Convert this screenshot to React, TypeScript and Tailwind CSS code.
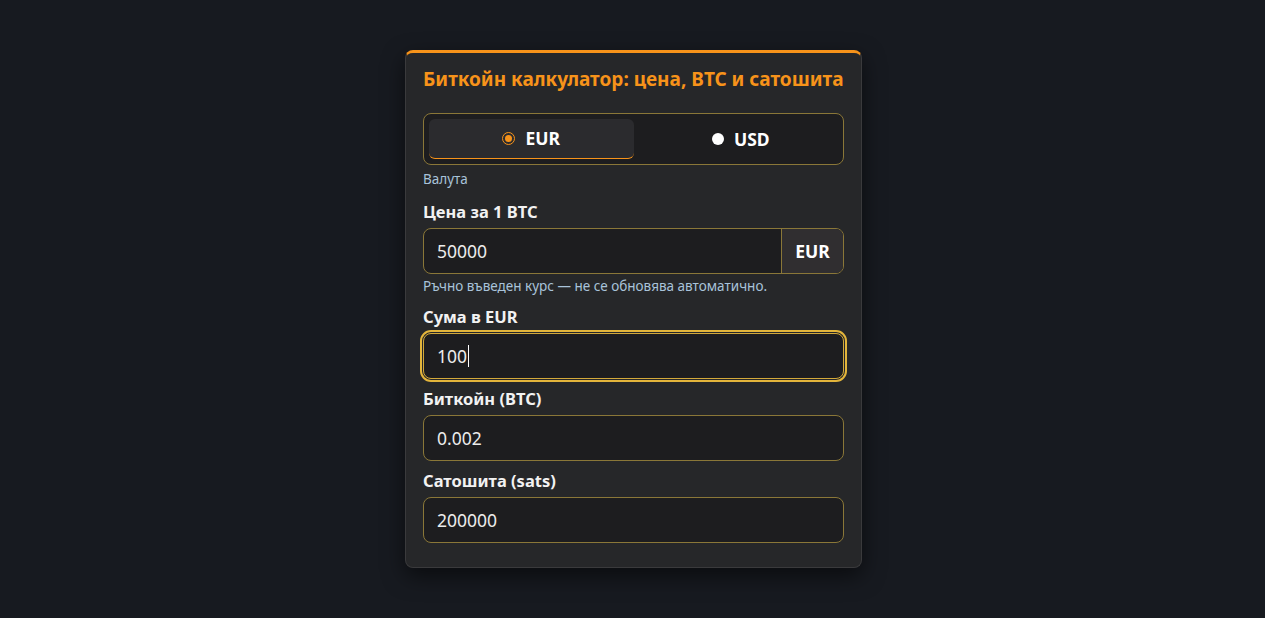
import React from "react";

const font = { fontFamily: '"Noto Sans", "Open Sans", sans-serif' };

function Field({ label, value, focused }: { label: string; value: string; focused?: boolean }) {
  return (
    <div className="flex flex-col gap-[6px]">
      <div className="text-[16.5px] leading-5 font-bold text-[#f2f2f2]">{label}</div>
      {focused ? (
        <div className="h-[46px] rounded-lg border border-[#d3a93a] bg-[#1d1d1f] outline-2 outline-offset-1 outline-[#e3b53b] outline flex items-center px-[13px] text-[17.5px] text-[#ececec]">
          {value}
          <span className="inline-block w-px h-[22px] bg-white ml-px" />
        </div>
      ) : (
        <div className="h-[46px] rounded-lg border border-[#8a7738] bg-[#1d1d1f] flex items-center px-[13px] text-[17.5px] text-[#ececec]">
          {value}
        </div>
      )}
    </div>
  );
}

export default function App() {
  return (
    <div style={font} className="min-h-screen bg-[#171a20] flex justify-center pt-[50px]">
      <div className="w-[457px] h-[518px] ml-[2px] rounded-lg border border-[#3a3a3c] border-t-[3px] border-t-[#f7931a] bg-[#262729] shadow-[0_8px_22px_rgba(0,0,0,0.55)] px-[17px] pt-[14px]">
        <h1 className="text-[19px] leading-6 font-bold text-[#f7931a] whitespace-nowrap">
          Биткойн калкулатор: цена, BTC и сатошита
        </h1>

        <div className="mt-[22px] h-[52px] rounded-lg border border-[#8a7738] bg-[#1d1d1f] p-[5px] grid grid-cols-2">
          <div className="h-[40px] rounded-md bg-[#2b2b2e] border-b border-[#f7931a] flex items-center justify-center gap-[10px]">
            <span className="w-[13px] h-[13px] rounded-full border-[1.5px] border-[#f7931a] flex items-center justify-center">
              <span className="w-[7px] h-[7px] rounded-full bg-[#f7931a]" />
            </span>
            <span className="text-[17.5px] font-bold text-white">EUR</span>
          </div>
          <div className="h-[40px] pl-[10px] flex items-center justify-center gap-[10px]">
            <span className="w-[12px] h-[12px] rounded-full bg-white" />
            <span className="text-[17.5px] font-bold text-white">USD</span>
          </div>
        </div>
        <div className="mt-[6px] text-[13.5px] leading-4 text-[#a9c3da]">Валута</div>

        <div className="mt-[15px] flex flex-col gap-[6px]">
          <div className="text-[16.5px] leading-5 font-bold text-[#f2f2f2]">Цена за 1 BTC</div>
          <div className="h-[46px] rounded-lg border border-[#8a7738] bg-[#1d1d1f] flex overflow-hidden">
            <div className="flex-1 flex items-center px-[13px] text-[17.5px] text-[#ececec]">50000</div>
            <div className="w-[62px] border-l border-[#8a7738] bg-[#302e30] flex items-center justify-center text-[17.5px] font-bold text-white">
              EUR
            </div>
          </div>
        </div>
        <div className="mt-[4px] text-[13.5px] leading-4 text-[#a9c3da] whitespace-nowrap">
          Ръчно въведен курс — не се обновява автоматично.
        </div>

        <div className="mt-[13px] flex flex-col gap-[10px]">
          <Field label="Сума в EUR" value="100" focused />
          <Field label="Биткойн (BTC)" value="0.002" />
          <Field label="Сатошита (sats)" value="200000" />
        </div>
      </div>
    </div>
  );
}
